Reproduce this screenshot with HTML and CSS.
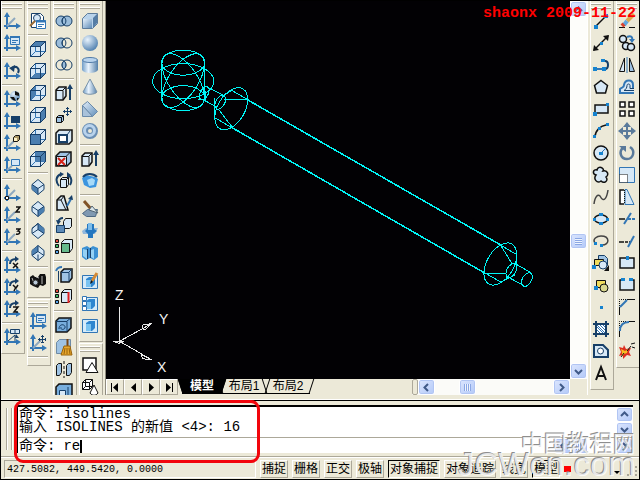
FILE: index.html
```html
<!DOCTYPE html>
<html lang="zh-CN">
<head>
<meta charset="utf-8">
<title>CAD</title>
<link rel="stylesheet" href="styles.css">
</head>
<body>
<svg class="sprite" aria-hidden="true">
  <defs>
    <linearGradient id="g" x1="0" y1="0" x2="1" y2="1"><stop offset="0" stop-color="#e4f0fb"/><stop offset="1" stop-color="#5f8cb8"/></linearGradient>
    <linearGradient id="gh" x1="0" x2="1"><stop offset="0" stop-color="#6f9cc6"/><stop offset=".4" stop-color="#eaf4fd"/><stop offset="1" stop-color="#5580aa"/></linearGradient>
    <radialGradient id="gr" cx=".35" cy=".3" r=".75"><stop offset="0" stop-color="#e8f3fd"/><stop offset="1" stop-color="#4f7fae"/></radialGradient>
  </defs>
  <!-- coordinate system icons -->
  <symbol id="axes" viewBox="0 0 18 18"><path class="b2" d="M4 17V3M1 14h14"/><path class="fb" d="M4 0l3 5H1zM18 14l-5-3v6z"/></symbol>
  <symbol id="ucs" viewBox="0 0 18 18"><use href="#axes"/><path class="g2" d="M4 14l8-8"/></symbol>
  <symbol id="ucs-dlg" viewBox="0 0 18 18"><use href="#axes"/><path class="b lt" d="M7.500 2.500h9v8h-9z"/><path class="b2" d="M7 3h10"/><path class="b" d="M9 6.500h6M9 8.500h4"/></symbol>
  <symbol id="ucs-prev" viewBox="0 0 18 18"><use href="#axes"/><path class="n2" d="M15 11c2-4-1-8-6-5"/><path class="fn" d="M6 6l6-3-1 7z"/></symbol>
  <symbol id="ucs-world" viewBox="0 0 18 18"><use href="#axes"/><circle cx="12" cy="6" r="5" fill="url(#gr)"/><path class="fk" d="M12 1l4 2v3l-4-1zM7 7l4 0 2 4-3-1zM14 8l2 0-2 3z"/></symbol>
  <symbol id="ucs-obj" viewBox="0 0 18 18"><use href="#axes"/><path class="fn" d="M8 4h9v7H8z"/></symbol>
  <symbol id="ucs-face" viewBox="0 0 18 18"><use href="#axes"/><path class="g2" d="M4 14l7-7"/><path class="k" fill="#aa9766" d="M10.500 3.500l2-2h4v4l-2 2h-4z"/><path d="M11 4h3v3h-3z" fill="#fff3c6"/></symbol>
  <symbol id="ucs-view" viewBox="0 0 18 18"><use href="#axes"/><path class="b lt" d="M8.500 3.500h8v6h-8z"/><path class="g2" d="M4 14l5-4"/></symbol>
  <symbol id="ucs-origin" viewBox="0 0 18 18"><use href="#ucs"/><path class="k" fill="#fff" d="M2.500 12.500h3v3h-3z"/></symbol>
  <symbol id="ucs-z" viewBox="0 0 18 18"><use href="#ucs"/><path class="k2" d="M13 1h4l-4 5h4"/></symbol>
  <symbol id="ucs-3" viewBox="0 0 18 18"><use href="#ucs"/><path class="k2" d="M13 1h4l-2 2c3 0 2 4-2 3"/></symbol>
  <symbol id="arc-arrow" viewBox="0 0 18 18"><use href="#axes"/><path class="n2" d="M7 8c0-4 3-5 6-5"/><path class="fn" d="M12 0l4 3-4 3z"/></symbol>
  <symbol id="ucs-rx" viewBox="0 0 18 18"><use href="#arc-arrow"/><path class="k2" d="M10 7l5 5M15 7l-5 5"/></symbol>
  <symbol id="ucs-ry" viewBox="0 0 18 18"><use href="#arc-arrow"/><path class="k2" d="M10 7l3 3 2-3M13 9l-2 4"/></symbol>
  <symbol id="ucs-rz" viewBox="0 0 18 18"><use href="#arc-arrow"/><path class="k2" d="M10 7h5l-4 5h4"/></symbol>
  <symbol id="ucs-apply" viewBox="0 0 18 18"><use href="#axes"/><path class="n lt" d="M7.500 1.500h9v4h-9zM12 1v5"/><path class="n" d="M5 13l7-6v6"/><path class="fn" d="M13 6l3 4h-4z"/></symbol>
  <symbol id="ucs-move" viewBox="0 0 18 18"><use href="#ucs"/><path class="n" d="M13.500 1v8M9 5.500h8M12 2.500h3M12 8.500h3M10.500 4v3M16.500 4v3"/></symbol>
  <!-- view icons -->
  <symbol id="named" viewBox="0 0 18 18"><path class="n" fill="#fff" d="M2.500 1.500h9l3 3v11h-12z"/><circle cx="8" cy="6" r="3.500" class="n lt"/><path d="M6 9l-5 5" stroke="#9a6b35" stroke-width="2"/><path class="b" fill="#fff" d="M7.500 8.500h9v8h-9z"/><path class="b2" d="M7 9.500h10"/><path class="b" d="M9 12.500h6M9 14.500h4"/></symbol>
  <symbol id="box" viewBox="0 0 18 18"><path class="n lt" d="M1.500 6.500l5-5h10v10l-5 5h-10z"/><path class="b" d="M6.500 1.500v10h10M6.500 11.500l-5 5"/></symbol>
  <symbol id="boxe" viewBox="0 0 18 18"><path class="n" d="M1.500 6.500h10v10h-10zM11.500 6.500l5-5M1.500 6.500l5-5h10v10l-5 5"/></symbol>
  <symbol id="v-top" viewBox="0 0 18 18"><use href="#box"/><path class="fm" d="M1.500 6.500l5-5h10l-5 5z"/><use href="#boxe"/></symbol>
  <symbol id="v-bottom" viewBox="0 0 18 18"><use href="#box"/><path class="fm" d="M1.500 16.500l5-5h10l-5 5z"/><use href="#boxe"/></symbol>
  <symbol id="v-left" viewBox="0 0 18 18"><use href="#box"/><path class="fm" d="M1.500 6.500l5-5v10l-5 5z"/><use href="#boxe"/></symbol>
  <symbol id="v-right" viewBox="0 0 18 18"><use href="#box"/><path class="fm" d="M11.500 6.500l5-5v10l-5 5z"/><use href="#boxe"/></symbol>
  <symbol id="v-front" viewBox="0 0 18 18"><use href="#box"/><path class="fm" d="M1.500 6.500h10v10h-10z"/><use href="#boxe"/></symbol>
  <symbol id="v-back" viewBox="0 0 18 18"><use href="#box"/><path class="fm" d="M6.500 1.500h10v10h-10z"/><use href="#boxe"/></symbol>
  <symbol id="iso" viewBox="0 0 18 18"><path class="n lt" d="M9 1.500l6 5v5l-6 5-6-5v-5z"/></symbol>
  <symbol id="v-sw" viewBox="0 0 18 18"><use href="#iso"/><path class="fm" d="M3 6.500l6 4v6l-6-5z"/><path class="n" d="M3 6.500l6 4 6-4M9 10.500v6"/></symbol>
  <symbol id="v-se" viewBox="0 0 18 18"><use href="#iso"/><path class="fm" d="M15 6.500l-6 4v6l6-5z"/><path class="n" d="M3 6.500l6 4 6-4M9 10.500v6"/></symbol>
  <symbol id="v-ne" viewBox="0 0 18 18"><use href="#iso"/><path class="fm" d="M9 1.500l6 5v5l-6-4z"/><path class="n" d="M9 1.500v6l6 4M9 7.500l-6 4M9 1.500l-6 5"/></symbol>
  <symbol id="v-nw" viewBox="0 0 18 18"><use href="#iso"/><path class="fm" d="M9 1.500l-6 5v5l6-4z"/><path class="n" d="M9 1.500v6l6 4M9 7.500l-6 4M9 10.500v6"/></symbol>
  <symbol id="camera" viewBox="0 0 18 18"><path class="fk" d="M1 5l3-2 2 2h3l2-3h5l1 3v7l-3 2-3-1-2 3-5-2-3-2z"/><path d="M7 5l3 1M13 4v8M3 6l2 5" stroke="#bbb"/><circle cx="6.500" cy="10.500" r="2.500" fill="#b8c9d8" stroke="#333"/></symbol>
  <!-- solid editing icons -->
  <symbol id="union" viewBox="0 0 18 18"><g class="n" fill="#9bbddb"><circle cx="6" cy="9" r="5"/><circle cx="12" cy="9" r="5"/></g><path class="n" d="M9 5c-2.500 2-2.500 6 0 8 2.500-2 2.500-6 0-8z"/></symbol>
  <symbol id="subtract" viewBox="0 0 18 18"><circle cx="6" cy="9" r="5" class="n" fill="#9bbddb"/><circle cx="12" cy="9" r="5" class="n" fill="#ece9d8"/><path class="n" d="M9 5c-2.500 2-2.500 6 0 8 2.500-2 2.500-6 0-8z"/></symbol>
  <symbol id="intersect" viewBox="0 0 18 18"><g class="n"><circle cx="6" cy="9" r="5"/><circle cx="12" cy="9" r="5"/></g><path class="n" fill="#9bbddb" d="M9 5c-2.500 2-2.500 6 0 8 2.500-2 2.500-6 0-8z"/></symbol>
  <symbol id="kbox" viewBox="0 0 18 18"><path class="k2 md" d="M1 6l4-4h11v10l-4 4H1z"/><path class="k lt" d="M1.500 6.500h10v9h-10zM11.500 6l4-4"/></symbol>
  <symbol id="ext" viewBox="0 0 18 18"><path class="k2 lt" d="M1 6l3-3h7v9l-3 4H1z"/><path class="k" d="M1 6.500h7v9M8 6l3-3"/><path class="n2" d="M15 16V3"/><path class="fn" d="M15 0l3 5h-6z"/></symbol>
  <symbol id="mvf" viewBox="0 0 18 18"><path class="k md" d="M1.500 11.500l2-2h5v5l-2 2h-5zM1.500 11.500h5v5M6.500 11.500l2-2"/><path class="n" d="M12.500 1v9M8 5.500h9M11 2.500h3M11 8.500h3M9.500 4v3M15.500 4v3"/></symbol>
  <symbol id="offf" viewBox="0 0 18 18"><path class="k2 lt" d="M1 5l3-3h13v11l-3 3H1z"/><path class="n2" fill="#fff" d="M4 7h8v7H4z"/><path class="n" d="M12 7l3-4"/></symbol>
  <symbol id="delf" viewBox="0 0 18 18"><use href="#kbox"/><path d="M3 8l7 7M10 8l-7 7" stroke="#d42218" stroke-width="2"/></symbol>
  <symbol id="rotf" viewBox="0 0 18 18"><path class="k lt" d="M5.500 7.500l2-2h6v7l-2 3h-6zM5.500 7.500h6v8M11.500 7.500l2-2"/><path class="n2" d="M4 14C0 9 1 4 6 2M13 3c4 2 4 7 2 10"/><path class="fn" d="M5 0l4 2-4 3zM12 0v6l4-3z"/></symbol>
  <symbol id="tapf" viewBox="0 0 18 18"><path class="k2 lt" d="M2 16V6l4-4h3l4 14z"/><path class="k" d="M2 6l4 0 5 10M6 6l3-4"/><path class="b2" d="M12 12l4-7"/><path class="fn" d="M17 1l1 5-5-1z"/></symbol>
  <symbol id="cpf" viewBox="0 0 18 18"><path class="k lt" d="M8.500 5.500l2-3h6v8l-2 2h-6z"/><path class="n" fill="#5f8cb8" d="M1.500 9.500h8v7h-8z"/><path class="n2" d="M3 6c1-3 3-4 5-4"/><path class="fn" d="M1 4l5 1-3 4z"/></symbol>
  <symbol id="clrf" viewBox="0 0 18 18"><path class="k lt" d="M6.500 4.500l3-3h8v9l-3 4h-8z"/><path class="k" fill="#65b98b" d="M6.500 5.500h8v9h-8z"/><path class="k" fill="#e34a3c" d="M.500 1.500h3v3h-3z"/><path class="k" fill="#3ebc67" d="M.500 6.500h3v3h-3z"/><path class="k" fill="#55a4ea" d="M.500 12.500h3v3h-3z"/></symbol>
  <symbol id="cpe" viewBox="0 0 18 18"><path class="k2 md" d="M6 6l3-3h8v9l-3 4H6z"/><path class="n" d="M6 6.500h8v9M14 6l3-3M3.500 5v11"/><path class="b2" d="M1 5c1-3 3-4 6-4"/></symbol>
  <symbol id="clre" viewBox="0 0 18 18"><path class="k lt" d="M6.500 4.500l3-3h7v10l-3 3h-7zM6.500 4.500h7v10"/><path d="M13.500 4v11" stroke="#e02020" stroke-width="2"/><path class="k" fill="#e34a3c" d="M.500 1.500h3v3h-3z"/><path class="k" fill="#3ebc67" d="M.500 6.500h3v3h-3z"/><path class="k" fill="#55a4ea" d="M.500 12.500h3v3h-3z"/></symbol>
  <symbol id="imprint" viewBox="0 0 18 18"><path class="k2" fill="#78aedd" d="M1 5l3-3h12v10l-4 4H1z"/><path class="n" d="M1 5.500h11v10M12 5l4-3"/><path class="n" d="M4 13c0-6 7-5 6-1-1 2-5 2-4-1"/></symbol>
  <symbol id="clean" viewBox="0 0 18 18"><path class="md" stroke="#6e8aa5" d="M1.500 4.500l3-3h11v11l-3 3h-11z"/><path d="M12.500 1v7" stroke="#7b4716" stroke-width="2"/><path d="M9 8h6l2 9H6z" fill="#e7a72e" stroke="#98620b"/><path d="M10 10l-1 6M12 10v6M14 10l1 6" stroke="#98620b"/></symbol>
  <symbol id="separate" viewBox="0 0 18 18"><path class="k md" d="M1.500 5.500l2-2h3v9l-2 3h-3zM11.500 5.500l2-2h3v9l-2 3h-3z"/><path class="k" d="M9 1v3M9 6v3M9 11v3M9 16v2"/></symbol>
  <symbol id="shell" viewBox="0 0 18 18"><path class="k2" fill="#78aedd" d="M1 5l3-3h13v12l-4 4H1z"/><path class="n lt" d="M4.500 8.500h6v6h-6zM13 5v12"/></symbol>
  <!-- solids -->
  <symbol id="s-box" viewBox="0 0 18 18"><path fill="#b9d3ea" stroke="#5d7c9b" d="M1.500 6.500l5-5h10v10l-5 5h-10z"/><path fill="url(#g)" d="M2 7h9v9H2z"/><path fill="#557da5" d="M12 6l4-4v9l-4 5z"/></symbol>
  <symbol id="s-sphere" viewBox="0 0 18 18"><circle cx="9" cy="9" r="8" fill="url(#gr)"/></symbol>
  <symbol id="s-cyl" viewBox="0 0 18 18"><path fill="url(#gh)" d="M1 4v10c2 4 14 4 16 0V4z"/><ellipse cx="9" cy="4" rx="7.500" ry="2.500" fill="#b8d3ed" stroke="#527ca8"/></symbol>
  <symbol id="s-cone" viewBox="0 0 18 18"><path fill="url(#gh)" stroke="#7892a9" d="M9 1L2 14c2 3 12 3 14 0z"/></symbol>
  <symbol id="s-wedge" viewBox="0 0 18 18"><path fill="url(#g)" stroke="#6b8baa" d="M1.500 5.500l5-4 10 10-5 5z"/><path fill="#a9c2da" stroke="#6b8baa" d="M1.500 5.500v11h10z"/></symbol>
  <symbol id="s-torus" viewBox="0 0 18 18"><circle cx="9" cy="9" r="5" fill="none" stroke="#6b8fb4" stroke-width="6"/><circle cx="8.500" cy="8.500" r="5" fill="none" stroke="#b9d3ec" stroke-width="3"/></symbol>
  <symbol id="revolve" viewBox="0 0 18 18"><path fill="#3c95df" d="M1 6l4-3 9 2 3 2-2 8-6 1-6-3z"/><path fill="#a7daf8" d="M6 8l5-2 3 2-1 5-5 1z"/><path class="n2" d="M2 5c3-4 10-4 14 0"/></symbol>
  <symbol id="slice" viewBox="0 0 18 18"><path fill="#8099b1" stroke="#4c6883" d="M1.500 13.500l5-4h10l-2 7h-9z"/><path d="M3 1l7 8" stroke="#805326" stroke-width="3"/><path fill="#d9e4e8" stroke="#536674" d="M8 10l3-4 6 7z"/></symbol>
  <symbol id="section" viewBox="0 0 18 18"><path fill="#91b8dc" d="M1 9l4-3h12l-3 6H2z"/><path fill="#2578bf" d="M6 2h7v5l3 2-4 3v4H7v-4L4 9l2-2z"/><path fill="#7ebde9" d="M7 1h4v7H7z"/></symbol>
  <symbol id="interf" viewBox="0 0 18 18"><path fill="#3c91d3" d="M1 4l5-2 3 2 3-2 5 2v9l-4 3-4-2-4 2-4-3z"/><path fill="#95d1f4" d="M2 5l4 1v9l-4-3zM10 6l3-1v10l-3-2z"/><path class="n" d="M6.500 5v10M9.500 4v10"/></symbol>
  <symbol id="setup" viewBox="0 0 18 18"><path class="b" fill="#d5ebf9" d="M1.500 3.500h15v13h-15z"/><path fill="#2e86cf" d="M5 7l3-2h6v7l-3 3H5z"/><path fill="#79c3f0" d="M5 8h5v7H5z"/></symbol>
  <symbol id="setdraw" viewBox="0 0 18 18"><use href="#setup"/><path d="M16 1l-5 8" stroke="#d38a36" stroke-width="3"/><path class="fk" d="M10 8l2 2-3 2z"/></symbol>
  <symbol id="setview" viewBox="0 0 18 18"><use href="#setup"/><path class="b" fill="#fff" d="M1.500 2.500h4v4h-4zM1.500 7.500h4v4h-4zM1.500 12.500h4v4h-4z"/></symbol>
  <symbol id="flat" viewBox="0 0 18 18"><path class="k2" fill="#fff" d="M2 2h13v12H2z"/><path class="k" fill="#fff" d="M11 6.500l6 10H5z"/></symbol>
  <symbol id="solids" viewBox="0 0 18 18"><path class="k" fill="#fff" d="M1.500 4.500l3-3h7v7l-3 3h-7zM1.500 4.500h7v7M8.500 4.500l3-3M4.500 1.500v7h7M4.500 8.500l-3 3"/><path class="k" fill="#fff" d="M13 7l-4 8c2 3 6 3 8 0z"/></symbol>
  <!-- draw icons -->
  <symbol id="line" viewBox="0 0 18 18"><path class="k2" d="M3 15L15 3"/><path class="fb2" d="M2 13h4v4H2zM12 2h4v4h-4z"/></symbol>
  <symbol id="xline" viewBox="0 0 18 18"><path class="k2" d="M2 16L16 2"/><path class="fk" d="M1 17l1-6 5 5zM17 1l-6 1 5 5z"/><path class="fb2" d="M8 8h3v3H8z"/></symbol>
  <symbol id="pline" viewBox="0 0 18 18"><path class="b2" d="M3 13h8"/><path class="n2" d="M10 5h3c4 0 4 8 0 8"/><path class="fb2" d="M1 11h4v4H1zM10 11h4v4h-4zM9 3h4v3H9z"/></symbol>
  <symbol id="polygon" viewBox="0 0 18 18"><path class="k2 lt" d="M9 2.500l6.500 5-2 7.500h-9l-2-7.500z"/></symbol>
  <symbol id="rect" viewBox="0 0 18 18"><path class="k2 lt" d="M3 5h13v8H3z"/><path class="fb2" d="M1 12h4v4H1zM14 3h3v3h-3z"/></symbol>
  <symbol id="arc" viewBox="0 0 18 18"><path class="k2" d="M3 15c0-6 5-11 11-12"/><path class="fb2" d="M1 13h3v3H1zM6 5h3v3H6zM14 1h3v3h-3z"/></symbol>
  <symbol id="circle" viewBox="0 0 18 18"><circle cx="9" cy="9" r="7" class="k2 lt"/><path class="b" d="M9 9l5-5"/><path class="fb2" d="M7 8h4v3H7z"/></symbol>
  <symbol id="cloud" viewBox="0 0 18 18"><path class="k2 lt" d="M4 9C0 8 1 3 5 4c1-5 8-2 6 1 5-1 6 4 3 6 3 4-2 7-5 4-4 3-8-2-5-6z"/></symbol>
  <symbol id="spline" viewBox="0 0 18 18"><path class="sg" d="M2 16C3 8 6 6 8 8c4 8 7 1 8-6"/></symbol>
  <symbol id="ellipse" viewBox="0 0 18 18"><ellipse cx="9" cy="9" rx="6.500" ry="4" class="k2 lt"/><path class="fb2" d="M1 8h3v3H1zM7 3h4v3H7zM14 8h3v3h-3zM7 12h4v3H7z"/></symbol>
  <symbol id="ellarc" viewBox="0 0 18 18"><path class="sg" d="M3 11C0 7 5 4 9 4c9 0 9 9 1 9"/><path class="fb2" d="M2 10h3v3H2zM8 12h3v3H8z"/></symbol>
  <symbol id="insert" viewBox="0 0 18 18"><path class="n md" d="M6.500 1.500h6l3 3v7h-9z"/><path class="k" fill="#f0dc5d" d="M2.500 5.500h9v6h-9z"/><circle cx="11" cy="11" r="4" class="n lt"/><path class="fb2" d="M0 11h4v4H0z"/><path class="fk" d="M17 11v6h-5z"/></symbol>
  <symbol id="block" viewBox="0 0 18 18"><path class="k" fill="#f0dc5d" d="M4.500 4.500h9v7h-9z"/><circle cx="12" cy="12" r="4" class="k" fill="#d9d78d"/><path class="fb2" d="M2 10h4v4H2z"/></symbol>
  <symbol id="point" viewBox="0 0 18 18"><path class="fb2" d="M8 8h3v3H8z"/></symbol>
  <symbol id="hatch" viewBox="0 0 18 18"><path class="n2" d="M4 1v16M14 1v16M1 4h16M1 14h16"/><path fill="#fff" d="M5 5h8v8H5z"/><path class="b" d="M5 10l3 3M5 7l6 6M5 5l8 8M8 5l5 5M11 5l2 2"/></symbol>
  <symbol id="region" viewBox="0 0 18 18"><path class="n2 lt" d="M2 3h9l5 5v7H2z"/><circle cx="8.500" cy="9" r="3" class="n" fill="#fff"/></symbol>
  <symbol id="mtext" viewBox="0 0 18 18"><path class="k3" d="M4 16L9 3l5 13M6 12h6"/></symbol>
  <!-- modify icons -->
  <symbol id="erase" viewBox="0 0 18 18"><path class="k" d="M1 15.500h6M11 15.500h6"/><path d="M16 2L9 9" stroke="#dca650" stroke-width="4"/><path d="M9 9l-3 4" stroke="#5fa6df" stroke-width="4"/><path d="M6 12l-2 2" stroke="#d9432e" stroke-width="4"/></symbol>
  <symbol id="copy" viewBox="0 0 18 18"><circle cx="5" cy="5" r="3.500" class="k2 lt"/><circle cx="8" cy="12" r="3.500" class="k2 lt"/><circle cx="13" cy="13" r="3.500" class="k2 lt"/><path class="b2" d="M9 3c4-2 6 0 5 4"/><path class="fb" d="M11 5h6l-3 4z"/></symbol>
  <symbol id="mirror" viewBox="0 0 18 18"><path class="k lt" d="M6.500 2v13.500h-5z"/><path class="k md" d="M11.500 2v13.500h5z"/><path class="b" d="M9 1v16"/></symbol>
  <symbol id="offset" viewBox="0 0 18 18"><path class="b lt" stroke-width="2" d="M16 15H2v-4c2-2 4-1 4-4 1-6 9-6 9 0v3h1"/><path class="n" d="M16 12.500H6c2-1 3-3 3-5 0-2 3-2 3 0v3h4"/></symbol>
  <symbol id="array" viewBox="0 0 18 18"><path class="k2" fill="#fff" d="M2 2h5v5H2zM11 2h5v5h-5zM2 11h5v5H2zM11 11h5v5h-5z"/></symbol>
  <symbol id="move" viewBox="0 0 18 18"><path class="s2" d="M9 3v12M3 9h12"/><path class="fs" d="M9 0l4 5H5zM9 18l4-5H5zM0 9l5-4v8zM18 9l-5-4v8z"/></symbol>
  <symbol id="rotate" viewBox="0 0 18 18"><path fill="none" stroke="#5a7a9b" stroke-width="2.500" d="M12 3c6 4 3 12-3 12-7 0-8-8-4-11"/><path class="fs" d="M1 2h7v6z"/></symbol>
  <symbol id="scale" viewBox="0 0 18 18"><path class="b lt" d="M1.500 1.500h15v15h-15z"/><path class="k dot" fill="#fff" d="M1.500 8.500h8v8h-8z"/></symbol>
  <symbol id="stretch" viewBox="0 0 18 18"><path class="b lt" d="M7 1.500h2l7 15H7z"/><path class="k2" fill="#fff" d="M6 2H2v14h4"/><path class="k dot" d="M6.500 2v14"/></symbol>
  <symbol id="trim" viewBox="0 0 18 18"><path class="k2" d="M1 9h6"/><path class="b2" d="M6 14l7-11"/><path class="b2 dash" d="M10 9h8"/></symbol>
  <symbol id="extend" viewBox="0 0 18 18"><path class="k2" d="M1 10h5"/><path class="k2 dash" d="M7 10h5"/><path class="b2" d="M10 15l6-11"/></symbol>
  <symbol id="brkpt" viewBox="0 0 18 18"><path class="k2 lt" d="M8 4H2v10h14V4h-5"/><path class="fb2" d="M8 2h3v4H8z"/></symbol>
  <symbol id="brk" viewBox="0 0 18 18"><path class="k2 lt" d="M4 4H2v10h14V4h-2"/><path class="fb2" d="M3 2h4v3H3zM11 2h4v3h-4z"/></symbol>
  <symbol id="chamfer" viewBox="0 0 18 18"><path class="k dot" d="M1.500 8V1.500H8"/><path class="k" d="M1.500 9v8M9 1.500h8"/><path class="b2" d="M2 9l7-7"/></symbol>
  <symbol id="fillet" viewBox="0 0 18 18"><path class="k dot" d="M1.500 8V1.500H8"/><path class="k" d="M1.500 11v6M11 1.500h6"/><path class="b2" d="M2 11C2 5 5 2 11 2"/></symbol>
  <symbol id="explode" viewBox="0 0 18 18"><path fill="#dd2d20" d="M1 5l4 1 1-3 2 4 5-1-2 4 2 4-4-1-4 4v-4l-4 1 2-4z"/><path fill="#f8bd22" d="M3 7l4 2 3-2-1 4-3 1-2 3v-4z"/><path class="k" d="M9 9l4-5M13 2l4-1M14 5l3 1M6 11l-3 4"/></symbol>
</svg>

<div class="app">
  <main class="main">
    <div class="bars">
      <div class="col">
        <div class="bar"><i class="handle"></i>
          <button aria-label="UCS"><svg><use href="#ucs"/></svg></button>
          <button aria-label="显示 UCS 对话框"><svg><use href="#ucs-dlg"/></svg></button><hr>
          <button aria-label="上一个 UCS"><svg><use href="#ucs-prev"/></svg></button><hr>
          <button aria-label="世界 UCS"><svg><use href="#ucs-world"/></svg></button>
          <button aria-label="对象 UCS"><svg><use href="#ucs-obj"/></svg></button>
          <button aria-label="面 UCS"><svg><use href="#ucs-face"/></svg></button>
          <button aria-label="视图 UCS"><svg><use href="#ucs-view"/></svg></button><hr>
          <button aria-label="原点 UCS"><svg><use href="#ucs-origin"/></svg></button>
          <button aria-label="Z 轴矢量 UCS"><svg><use href="#ucs-z"/></svg></button>
          <button aria-label="三点 UCS"><svg><use href="#ucs-3"/></svg></button><hr>
          <button aria-label="X 轴旋转 UCS"><svg><use href="#ucs-rx"/></svg></button>
          <button aria-label="Y 轴旋转 UCS"><svg><use href="#ucs-ry"/></svg></button>
          <button aria-label="Z 轴旋转 UCS"><svg><use href="#ucs-rz"/></svg></button><hr>
          <button aria-label="应用 UCS"><svg><use href="#ucs-apply"/></svg></button>
        </div>
      </div>
      <div class="col">
        <div class="bar"><i class="handle"></i>
          <button aria-label="命名视图"><svg><use href="#named"/></svg></button><hr>
          <button aria-label="俯视图"><svg><use href="#v-top"/></svg></button>
          <button aria-label="仰视图"><svg><use href="#v-bottom"/></svg></button>
          <button aria-label="左视图"><svg><use href="#v-left"/></svg></button>
          <button aria-label="右视图"><svg><use href="#v-right"/></svg></button>
          <button aria-label="主视图"><svg><use href="#v-front"/></svg></button>
          <button aria-label="后视图"><svg><use href="#v-back"/></svg></button><hr>
          <button aria-label="西南等轴测"><svg><use href="#v-sw"/></svg></button>
          <button aria-label="东南等轴测"><svg><use href="#v-se"/></svg></button>
          <button aria-label="东北等轴测"><svg><use href="#v-ne"/></svg></button>
          <button aria-label="西北等轴测"><svg><use href="#v-nw"/></svg></button><hr>
          <button aria-label="相机"><svg><use href="#camera"/></svg></button>
        </div>
        <div class="bar next"><i class="handle"></i>
          <button aria-label="显示 UCS"><svg><use href="#ucs-dlg"/></svg></button>
          <button aria-label="移动 UCS"><svg><use href="#ucs-move"/></svg></button><hr>
        </div>
      </div>
      <div class="col">
        <div class="bar"><i class="handle"></i>
          <button aria-label="并集"><svg><use href="#union"/></svg></button>
          <button aria-label="差集"><svg><use href="#subtract"/></svg></button>
          <button aria-label="交集"><svg><use href="#intersect"/></svg></button><hr>
          <button aria-label="拉伸面"><svg><use href="#ext"/></svg></button>
          <button aria-label="移动面"><svg><use href="#mvf"/></svg></button>
          <button aria-label="偏移面"><svg><use href="#offf"/></svg></button>
          <button aria-label="删除面"><svg><use href="#delf"/></svg></button>
          <button aria-label="旋转面"><svg><use href="#rotf"/></svg></button>
          <button aria-label="倾斜面"><svg><use href="#tapf"/></svg></button>
          <button aria-label="复制面"><svg><use href="#cpf"/></svg></button>
          <button aria-label="着色面"><svg><use href="#clrf"/></svg></button><hr>
          <button aria-label="复制边"><svg><use href="#cpe"/></svg></button>
          <button aria-label="着色边"><svg><use href="#clre"/></svg></button><hr>
          <button aria-label="压印"><svg><use href="#imprint"/></svg></button>
          <button aria-label="清除"><svg><use href="#clean"/></svg></button>
          <button aria-label="分割"><svg><use href="#separate"/></svg></button>
          <button aria-label="抽壳"><svg><use href="#shell"/></svg></button>
        </div>
      </div>
      <div class="col">
        <div class="bar"><i class="handle"></i>
          <button aria-label="长方体"><svg><use href="#s-box"/></svg></button>
          <button aria-label="球体"><svg><use href="#s-sphere"/></svg></button>
          <button aria-label="圆柱体"><svg><use href="#s-cyl"/></svg></button>
          <button aria-label="圆锥体"><svg><use href="#s-cone"/></svg></button>
          <button aria-label="楔体"><svg><use href="#s-wedge"/></svg></button>
          <button aria-label="圆环"><svg><use href="#s-torus"/></svg></button><hr>
          <button aria-label="拉伸"><svg><use href="#ext"/></svg></button>
          <button aria-label="旋转"><svg><use href="#revolve"/></svg></button><hr>
          <button aria-label="剖切"><svg><use href="#slice"/></svg></button>
          <button aria-label="切割"><svg><use href="#section"/></svg></button>
          <button aria-label="干涉"><svg><use href="#interf"/></svg></button><hr>
          <button aria-label="设置图形"><svg><use href="#setdraw"/></svg></button>
          <button aria-label="设置视图"><svg><use href="#setview"/></svg></button>
          <button aria-label="设置轮廓"><svg><use href="#setup"/></svg></button>
        </div>
        <div class="bar next grow"><i class="handle"></i>
          <button aria-label="二维"><svg><use href="#flat"/></svg></button>
          <button aria-label="三维"><svg><use href="#solids"/></svg></button>
        </div>
      </div>
    </div>

    <section class="view">
      <div class="canvas">
        <svg viewBox="106 1 463 377" preserveAspectRatio="xMinYMin meet" role="img" aria-label="线框模型">
          <g class="wire">
            <ellipse cx="183" cy="62.500" rx="21.500" ry="12.500"/>
            <ellipse cx="183" cy="98" rx="21.500" ry="12.500"/>
            <path d="M161.500 62v36M204.500 62v36"/>
            <ellipse cx="183" cy="81" rx="30.500" ry="17.500"/>
            <ellipse cx="183" cy="80.500" rx="31" ry="14.500" transform="rotate(-56 183 80.500)"/>
            <ellipse cx="183" cy="80.500" rx="31" ry="14.500" transform="rotate(56 183 80.500)"/>
            <ellipse cx="204" cy="93" rx="7" ry="4" transform="rotate(-60 204 93)"/>
            <ellipse cx="220" cy="102" rx="7.500" ry="4.500" transform="rotate(-60 220 102)"/>
            <path d="M207 87l16 8M202 99l15 8M198 99h7v-8"/>
            <ellipse cx="231" cy="108.500" rx="23" ry="13.500" transform="rotate(-60 231 108.500)"/>
            <path d="M222 96l10-6M224 99.500h23M219 110l13 17M214.500 98v20"/>
            <path d="M232 90.500l283 163M214.500 117.500l285.500 164"/>
            <ellipse cx="499.500" cy="263.500" rx="23" ry="13.500" transform="rotate(-60 499.500 263.500)"/>
            <path d="M500 245l11 18M483 272.500h22M500 281.500l14-7M515.500 250v16"/>
            <ellipse cx="510.500" cy="270" rx="7.500" ry="4.500" transform="rotate(-60 510.500 270)"/>
            <ellipse cx="526" cy="279" rx="7.500" ry="4.500" transform="rotate(-60 526 279)"/>
            <path d="M514 263l16 9M508 277l15 8"/>
          </g>
          <path class="heavy" d="M232 127.500l252 145M247 99.500l253 145"/>
          <g class="triad">
            <path d="M119.500 306v35M119.500 340.500l32-17.500M119.500 340.500l32 18.500M113 340.500h11l-5 2z"/>
            <path d="M143 324l8-1-6 6-3-1zM142 354l9 5-8-1-2-3z"/>
            <text x="115" y="299">Z</text><text x="159" y="323">Y</text><text x="157" y="371">X</text>
          </g>
        </svg>
        <p class="stamp">shaonx 2009-11-22</p>
      </div>
      <div class="vscroll">
        <button class="sb" aria-label="向上"><svg viewBox="0 0 9 9"><path d="M1 6l3.500-3.500L8 6"/></svg></button>
        <span class="before"></span><span class="sb grip v"></span><span class="after"></span>
        <button class="sb" aria-label="向下"><svg viewBox="0 0 9 9"><path d="M1 3l3.500 3.500L8 3"/></svg></button>
      </div>
      <div class="tabrow">
        <div class="nav">
          <button aria-label="第一个"><svg viewBox="0 0 9 9"><path d="M0 0h1v9H0zM7 0v9L2 4.500z"/></svg></button>
          <button aria-label="上一个"><svg viewBox="0 0 9 9"><path d="M7 0v9L2 4.500z"/></svg></button>
          <button aria-label="下一个"><svg viewBox="0 0 9 9"><path d="M2 0v9l5-4.500z"/></svg></button>
          <button aria-label="最后一个"><svg viewBox="0 0 9 9"><path d="M1 0v9l5-4.500zM7 0h1v9H7z"/></svg></button>
        </div>
        <div class="tabs">
          <button class="tab on">模型</button><button class="tab">布局1</button><button class="tab">布局2</button>
        </div>
        <div class="hscroll">
          <i class="split"></i>
          <button class="sb" aria-label="向左"><svg viewBox="0 0 9 9"><path d="M6 1L2.500 4.500 6 8"/></svg></button>
          <span class="before"></span><span class="sb grip"></span><span class="after"></span>
          <button class="sb" aria-label="向右"><svg viewBox="0 0 9 9"><path d="M3 1l3.500 3.500L3 8"/></svg></button>
        </div>
      </div>
    </section>

    <div class="bars dock">
      <div class="col">
        <div class="bar"><i class="handle"></i>
          <button aria-label="直线"><svg><use href="#line"/></svg></button>
          <button aria-label="构造线"><svg><use href="#xline"/></svg></button>
          <button aria-label="多段线"><svg><use href="#pline"/></svg></button>
          <button aria-label="正多边形"><svg><use href="#polygon"/></svg></button>
          <button aria-label="矩形"><svg><use href="#rect"/></svg></button>
          <button aria-label="圆弧"><svg><use href="#arc"/></svg></button>
          <button aria-label="圆"><svg><use href="#circle"/></svg></button>
          <button aria-label="修订云线"><svg><use href="#cloud"/></svg></button>
          <button aria-label="样条曲线"><svg><use href="#spline"/></svg></button>
          <button aria-label="椭圆"><svg><use href="#ellipse"/></svg></button>
          <button aria-label="椭圆弧"><svg><use href="#ellarc"/></svg></button>
          <button aria-label="插入块"><svg><use href="#insert"/></svg></button>
          <button aria-label="创建块"><svg><use href="#block"/></svg></button>
          <button aria-label="点"><svg><use href="#point"/></svg></button>
          <button aria-label="图案填充"><svg><use href="#hatch"/></svg></button>
          <button aria-label="面域"><svg><use href="#region"/></svg></button>
          <button aria-label="多行文字"><svg><use href="#mtext"/></svg></button>
        </div>
      </div>
      <div class="col">
        <div class="bar"><i class="handle"></i>
          <button aria-label="删除"><svg><use href="#erase"/></svg></button>
          <button aria-label="复制"><svg><use href="#copy"/></svg></button>
          <button aria-label="镜像"><svg><use href="#mirror"/></svg></button>
          <button aria-label="偏移"><svg><use href="#offset"/></svg></button>
          <button aria-label="阵列"><svg><use href="#array"/></svg></button>
          <button aria-label="移动"><svg><use href="#move"/></svg></button>
          <button aria-label="旋转对象"><svg><use href="#rotate"/></svg></button>
          <button aria-label="缩放"><svg><use href="#scale"/></svg></button>
          <button aria-label="拉伸对象"><svg><use href="#stretch"/></svg></button>
          <button aria-label="修剪"><svg><use href="#trim"/></svg></button>
          <button aria-label="延伸"><svg><use href="#extend"/></svg></button>
          <button aria-label="打断于点"><svg><use href="#brkpt"/></svg></button>
          <button aria-label="打断"><svg><use href="#brk"/></svg></button>
          <button aria-label="倒角"><svg><use href="#chamfer"/></svg></button>
          <button aria-label="圆角"><svg><use href="#fillet"/></svg></button>
          <button aria-label="分解"><svg><use href="#explode"/></svg></button>
        </div>
      </div>
    </div>
  </main>

  <section class="command">
    <i class="grab"></i>
    <div class="console">
      <div class="history">
        <div class="log"><p>命令: isolines</p><p>输入 ISOLINES 的新值 &lt;4&gt;: 16</p></div>
        <div class="updown">
          <button class="sb" aria-label="上翻"><svg viewBox="0 0 9 9"><path d="M1 6l3.500-3.500L8 6"/></svg></button>
          <button class="sb" aria-label="下翻"><svg viewBox="0 0 9 9"><path d="M1 3l3.500 3.500L8 3"/></svg></button>
        </div>
      </div>
      <div class="prompt">
        <label for="cmd">命令:</label><input id="cmd" value="re"><i class="caret"></i>
        <div class="cmdscroll">
          <button class="sb" aria-label="左移"><svg viewBox="0 0 9 9"><path d="M6 1L2.500 4.500 6 8"/></svg></button>
          <span class="sb grip"></span><span class="after"></span>
          <button class="sb" aria-label="右移"><svg viewBox="0 0 9 9"><path d="M3 1l3.500 3.500L3 8"/></svg></button>
        </div>
      </div>
    </div>
    <div class="ring"></div>
  </section>

  <footer class="status">
    <output class="coords">427.5082, 449.5420, 0.0000</output>
    <button>捕捉</button><button>栅格</button><button>正交</button><button>极轴</button><button class="down">对象捕捉</button><button>对象追踪</button><button>线宽</button><button class="down">模型</button>
    <i class="dot-red"></i>
    <svg class="corner" viewBox="0 0 24 16"><path fill="#000" d="M0 10h6l-3 3z"/><path fill="#aaa79a" d="M21 13h2v2h-2zM17 13h2v2h-2zM21 9h2v2h-2zM13 13h2v2h-2zM17 9h2v2h-2zM21 5h2v2h-2z"/></svg>
  </footer>
  <div class="mark"><p class="mark-cn">中国教程网</p><p class="mark-en">JCWcn.com</p></div>
</div>
</body>
</html>
```
FILE: styles.css
```css
* { box-sizing: border-box; }
body { margin: 0; background: #000; }
p { margin: 0; }
button { appearance: none; border: 0; padding: 0; margin: 0; background: none; color: #000; font: inherit; }
.sprite { position: absolute; width: 0; height: 0; }

.app {
  position: relative;
  display: flex;
  flex-direction: column;
  height: 100vh;
  border: 1px solid #000;
  background: #ece9d8;
  font: 12px/14px "Liberation Sans", "Noto Sans CJK SC", sans-serif;
  overflow: hidden;
}

/* toolbars */
.main { display: flex; flex: 1; min-height: 0; }
.bars { display: flex; flex: none; gap: 2px; height: calc(100% - 5px); overflow: hidden; padding-right: 2px; border-right: 1px solid #8f8c7f; }
.dock { width: 52px; padding: 0 0 0 2px; border: 0; border-left: 1px solid #fff; }
.col { display: flex; flex-direction: column; flex: 0 0 24px; min-height: 0; }
.bar {
  display: flex;
  flex-direction: column;
  flex: none;
  padding: 2px 2px 5px 0;
  border-left: 1px solid #fff;
  border-right: 1px solid #aca899;
  border-bottom: 1px solid #aca899;
}
.bar.next { margin-top: 1px; border-top: 1px solid #fff; }
.bar.grow { flex: 1 0 auto; }
.bar button { flex: none; height: 22px; display: flex; align-items: center; justify-content: center; }
.bar svg { width: 18px; height: 18px; }
.handle { height: 5px; margin: 0 0 2px; border: solid #fff; border-width: 1px 0; box-shadow: 0 1px #aca899, inset 0 1px #aca899; }
.next .handle { margin-bottom: 3px; }
.bar hr { flex: none; width: 100%; height: 2px; margin: 2px 0; border: 0; border-top: 1px solid #aca899; border-bottom: 1px solid #fff; }

/* icon paint */
.b { stroke: #3276b5; }
.b2 { stroke: #3276b5; stroke-width: 2; }
.n { stroke: #173f68; }
.n2 { stroke: #173f68; stroke-width: 2; }
.k { stroke: #111; }
.k2 { stroke: #111; stroke-width: 1.5; }
.k3 { stroke: #111; stroke-width: 2; fill: none; }
.sg { stroke: #444; stroke-width: 1.5; fill: none; }
.g2 { stroke: #8ea8bf; stroke-width: 2; }
.s2 { stroke: #5a7a9b; stroke-width: 2; }
:is(.b, .b2, .n, .n2, .k, .k2, .g2, .s2):not([fill]) { fill: none; }
path.lt.lt.lt, circle.lt.lt.lt, ellipse.lt.lt.lt { fill: #d7e8f6; }
path.md.md.md { fill: #9fc3e4; }
.fb { fill: #3276b5; }
.fb2 { fill: #1683cf; }
.fn { fill: #173f68; }
.fk { fill: #111; }
.fm { fill: #4c7fb0; }
.fs { fill: #5a7a9b; }
.dot { stroke-dasharray: 1 1; }
.dash { stroke-dasharray: 3 1; }

/* drawing area */
.view { flex: 1; min-width: 0; display: grid; grid-template: minmax(0, 1fr) 16px 5px / minmax(0, 1fr) 17px; }
.canvas { position: relative; background: #020104; }
.canvas svg { display: block; width: 100%; height: 100%; }
.wire, .heavy { fill: none; stroke: #00f5f5; shape-rendering: crispEdges; }
.heavy { stroke-width: 1.5; }
.triad { fill: none; stroke: #e8e8e8; shape-rendering: crispEdges; }
.triad text { fill: #f4f4f4; stroke: none; font: 14px "Liberation Sans", sans-serif; }
.stamp { position: absolute; top: 5px; right: -66px; z-index: 2; color: #f00; font: bold 15px/16px "Liberation Mono", monospace; }

/* scroll bars */
.vscroll { display: flex; flex-direction: column; background: #fdfdfa; }
.sb {
  flex: none;
  display: flex;
  align-items: center;
  justify-content: center;
  width: 17px;
  height: 16px;
  border: 1px solid #fff;
  border-radius: 3px;
  background: linear-gradient(135deg, #dce6fe, #b3c9f8);
  box-shadow: inset 0 0 0 1px #b1c5f3;
}
.sb svg { width: 9px; height: 9px; }
.sb path { fill: none; stroke: #405a88; stroke-width: 2; }
.grip::before { content: ""; width: 7px; height: 7px; background: repeating-linear-gradient(90deg, #8ba7e4 0 1px, #eef4fe 1px 2px); }
.grip.v::before { background: repeating-linear-gradient(0deg, #8ba7e4 0 1px, #eef4fe 1px 2px); }
.vscroll .before { flex: 215; }
.vscroll .after { flex: 113; }
.hscroll { display: flex; width: 34%; margin-left: auto; background: #fbfbf8; }
.hscroll .before { flex: 24; }
.hscroll .after { flex: 78; }
.split { width: 6px; flex: none; border: 1px solid #aca899; border-radius: 2px; background: #ece9d8; }

/* layout tabs */
.tabrow { display: flex; min-width: 0; }
.nav { display: flex; }
.nav button { width: 18px; display: flex; align-items: center; justify-content: center; border: 1px solid; border-color: #fff #aca899 #aca899 #fff; }
.nav svg { width: 9px; height: 9px; }
.tabs { display: flex; margin-left: 4px; }
.tab { position: relative; z-index: 0; width: 40px; height: 15px; border-bottom: 1px solid #000; white-space: nowrap; }
.tab + .tab { width: 44px; }
.tab::before, .tab::after { content: ""; position: absolute; z-index: -1; top: 0; bottom: 0; width: 6px; }
.tab::before { left: -2px; border-left: 1px solid #000; transform: skewX(18deg); }
.tab::after { right: -2px; border-right: 1px solid #000; transform: skewX(-18deg); }
.tab.on { background: #000; color: #fff; font-weight: bold; }
.tab.on::before, .tab.on::after { background: #000; }

/* command window */
.command { position: relative; flex: none; display: flex; height: 57px; padding: 4px 6px 3px 5px; border-top: 1px solid #000; border-bottom: 1px solid #aca899; box-shadow: 0 -1px #fff; }
.grab { width: 6px; margin: 3px 5px 3px 0; border: solid #aca899; border-width: 0 1px; box-shadow: inset 1px 0 #fff, 1px 0 #fff; }
.console { flex: 1; min-width: 0; border: solid #000; border-width: 2px 0 0 1px; background: #fff; font: 14px/14px "Liberation Mono", "Noto Sans CJK SC", monospace; }
.history { display: flex; height: 31px; border-bottom: 1px solid #aca899; }
.log { flex: 1; padding: 0 1px; white-space: nowrap; }
.log p { height: 13px; }
.updown { width: 17px; }
.updown .sb { height: 15px; }
.prompt { display: flex; align-items: center; height: 16px; padding-left: 1px; }
.prompt input { width: 17px; height: 16px; margin-left: 8px; padding: 0; border: 0; background: none; font: inherit; outline: 0; }
.caret { width: 2px; height: 13px; background: #000; }
.cmdscroll { display: flex; width: 79px; margin-left: auto; }
.cmdscroll .after { flex: 1; }
.ring { position: absolute; left: 13px; top: -1px; width: 246px; height: 63px; border: 3px solid #f2050c; border-radius: 9px; z-index: 3; }

/* status bar */
.status { flex: none; display: flex; align-items: center; gap: 4px; height: 22px; padding: 2px 1px 1px 3px; border-top: 1px solid #fff; }
.coords { flex: 1; max-width: 252px; height: 18px; padding-left: 2px; border: 1px solid; border-color: #aca899 #fff #fff #aca899; font: 10px/17px "Liberation Mono", monospace; white-space: nowrap; }
.status button { flex: none; height: 18px; padding: 0 1px; border: 1px solid; border-color: #fff #aca899 #aca899 #fff; line-height: 14px; white-space: nowrap; }
.status .down { border-color: #000 #fff #fff #000; }
.dot-red { flex: none; width: 7px; height: 6px; background: #f00; }
.corner { flex: none; width: 24px; height: 16px; margin-left: auto; }

/* watermark */
.mark { position: absolute; right: 3px; bottom: 1px; z-index: 4; text-align: right; color: rgba(255, 255, 255, .8); text-shadow: -1px -1px #8e8e8e; pointer-events: none; }
.mark-cn { font: 23px/20px "Noto Sans CJK SC", sans-serif; }
.mark-en { font: 33px/26px "Liberation Sans", sans-serif; }
```
